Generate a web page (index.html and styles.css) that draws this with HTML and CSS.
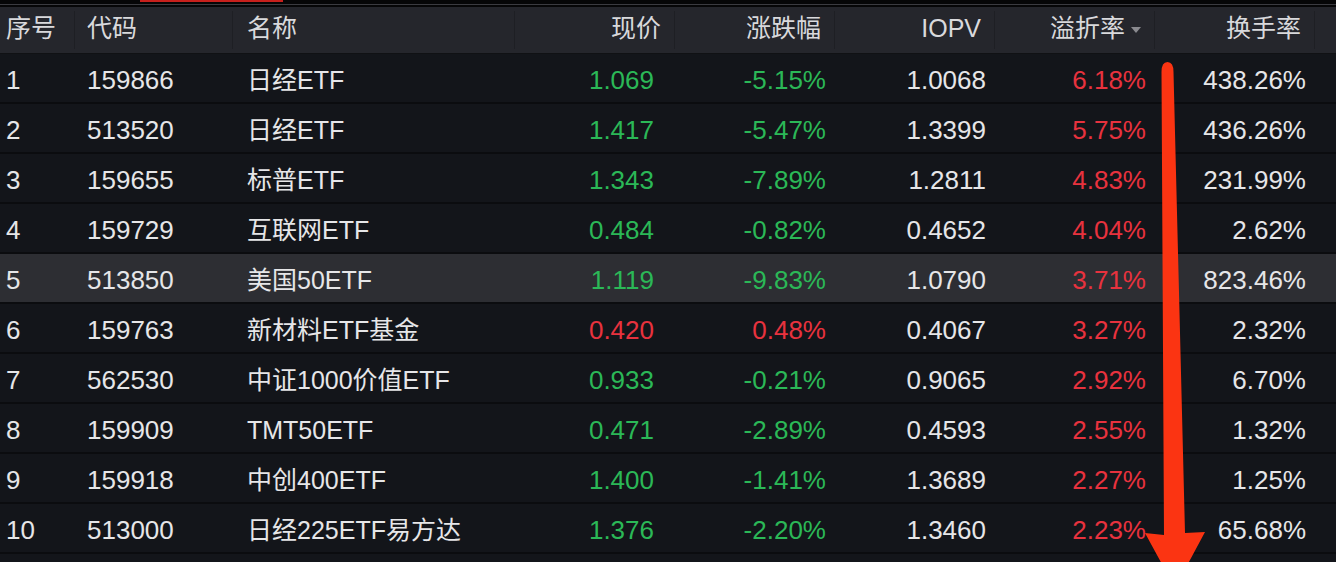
FILE: index.html
```html
<!DOCTYPE html>
<html lang="zh-CN">
<head>
<meta charset="utf-8">
<link rel="stylesheet" href="styles.css">
</head>
<body>
<div class="topband"><div class="tab-indicator"></div><div class="topline"></div></div>
<div class="table">
  <div class="row head">
    <div class="c l first">序号</div>
    <div class="c l code">代码</div>
    <div class="c l name">名称</div>
    <div class="c r">现价</div>
    <div class="c r">涨跌幅</div>
    <div class="c r">IOPV</div>
    <div class="c r sort">溢折率<span class="tri"></span></div>
    <div class="c r">换手率</div>
    <div class="c"></div>
  </div>
  <div class="row"><div class="c l first">1</div><div class="c l code">159866</div><div class="c l name">日经ETF</div><div class="c r price g">1.069</div><div class="c r g">-5.15%</div><div class="c r">1.0068</div><div class="c r red">6.18%</div><div class="c r">438.26%</div><div class="c"></div></div>
  <div class="row"><div class="c l first">2</div><div class="c l code">513520</div><div class="c l name">日经ETF</div><div class="c r price g">1.417</div><div class="c r g">-5.47%</div><div class="c r">1.3399</div><div class="c r red">5.75%</div><div class="c r">436.26%</div><div class="c"></div></div>
  <div class="row"><div class="c l first">3</div><div class="c l code">159655</div><div class="c l name">标普ETF</div><div class="c r price g">1.343</div><div class="c r g">-7.89%</div><div class="c r">1.2811</div><div class="c r red">4.83%</div><div class="c r">231.99%</div><div class="c"></div></div>
  <div class="row"><div class="c l first">4</div><div class="c l code">159729</div><div class="c l name">互联网ETF</div><div class="c r price g">0.484</div><div class="c r g">-0.82%</div><div class="c r">0.4652</div><div class="c r red">4.04%</div><div class="c r">2.62%</div><div class="c"></div></div>
  <div class="row sel"><div class="c l first">5</div><div class="c l code">513850</div><div class="c l name">美国50ETF</div><div class="c r price g">1.119</div><div class="c r g">-9.83%</div><div class="c r">1.0790</div><div class="c r red">3.71%</div><div class="c r">823.46%</div><div class="c"></div></div>
  <div class="row"><div class="c l first">6</div><div class="c l code">159763</div><div class="c l name">新材料ETF基金</div><div class="c r price red">0.420</div><div class="c r red">0.48%</div><div class="c r">0.4067</div><div class="c r red">3.27%</div><div class="c r">2.32%</div><div class="c"></div></div>
  <div class="row"><div class="c l first">7</div><div class="c l code">562530</div><div class="c l name">中证1000价值ETF</div><div class="c r price g">0.933</div><div class="c r g">-0.21%</div><div class="c r">0.9065</div><div class="c r red">2.92%</div><div class="c r">6.70%</div><div class="c"></div></div>
  <div class="row"><div class="c l first">8</div><div class="c l code">159909</div><div class="c l name">TMT50ETF</div><div class="c r price g">0.471</div><div class="c r g">-2.89%</div><div class="c r">0.4593</div><div class="c r red">2.55%</div><div class="c r">1.32%</div><div class="c"></div></div>
  <div class="row"><div class="c l first">9</div><div class="c l code">159918</div><div class="c l name">中创400ETF</div><div class="c r price g">1.400</div><div class="c r g">-1.41%</div><div class="c r">1.3689</div><div class="c r red">2.27%</div><div class="c r">1.25%</div><div class="c"></div></div>
  <div class="row"><div class="c l first">10</div><div class="c l code">513000</div><div class="c l name">日经225ETF易方达</div><div class="c r price g">1.376</div><div class="c r g">-2.20%</div><div class="c r">1.3460</div><div class="c r red">2.23%</div><div class="c r">65.68%</div><div class="c"></div></div>
  <div class="row tail"></div>
</div>
<svg class="arrow" width="1336" height="562" viewBox="0 0 1336 562">
  <path d="M1161.5 72 Q1161.5 62 1167.5 62 Q1173.5 62 1173.5 72 L1185 533 L1205 532 L1175 588 L1145 533 L1164 535 Z" fill="#fb3412"/>
</svg>
</body>
</html>
```
FILE: styles.css
```css
html, body {
  margin: 0;
  padding: 0;
  background: #13151a;
  width: 1336px;
  height: 562px;
  overflow: hidden;
  font-family: "Liberation Sans", "Noto Sans CJK SC", sans-serif;
  color: #e6e6e8;
}
body { position: relative; }
.topband {
  height: 7px;
  background: #060607;
  position: relative;
}
.tab-indicator {
  position: absolute;
  left: 140px;
  top: 0;
  width: 143px;
  height: 2px;
  background: #c8201c;
}
.topline {
  position: absolute;
  left: 0;
  right: 0;
  top: 4px;
  height: 1px;
  background: #3b3b40;
}
.table { display: flex; flex-direction: column; }
.row {
  display: grid;
  grid-template-columns: 75px 158px 282px 160px 160px 160px 160px 160px 21px;
  height: 48px;
  border-bottom: 2px solid #0b0c0f;
  align-items: center;
  font-size: 26px;
  line-height: 30px;
  box-sizing: content-box;
}
.row .c { padding-top: 4px; }
.row .c.name { font-size: 25px; }
.row.head {
  height: 46px;
  background: #25262c;
  border-bottom: 1px solid #101114;
  color: #d9d9dc;
  font-size: 25px;
}
.row.head .c {
  height: 38px;
  padding-top: 0;
  padding-bottom: 4px;
  box-sizing: border-box;
  display: flex;
  align-items: center;
  border-right: 1px solid #1e1f24;
}
.row.head .c.l { justify-content: flex-start; }
.row.head .c.r { justify-content: flex-end; padding-right: 13px; }
.row.head .c:last-child { border-right: none; }
.row.sel { background: #2d2e33; }
.row.tail { height: 10px; border-bottom: none; }
.c { white-space: nowrap; box-sizing: border-box; }
.c.l { text-align: left; }
.c.first { padding-left: 6px; }
.c.code { padding-left: 12px; }
.c.name { padding-left: 14px; }
.c.r { text-align: right; padding-right: 9px; }
.c.r.price { padding-right: 21px; }
.g { color: #2bb857; }
.red { color: #e8323e; }
.tri {
  display: inline-block;
  width: 0;
  height: 0;
  border-left: 5px solid transparent;
  border-right: 5px solid transparent;
  border-top: 6px solid #8a8a8f;
  margin-left: 6px;
  margin-top: 4px;
}
.arrow {
  position: absolute;
  left: 0;
  top: 0;
  pointer-events: none;
}
```
